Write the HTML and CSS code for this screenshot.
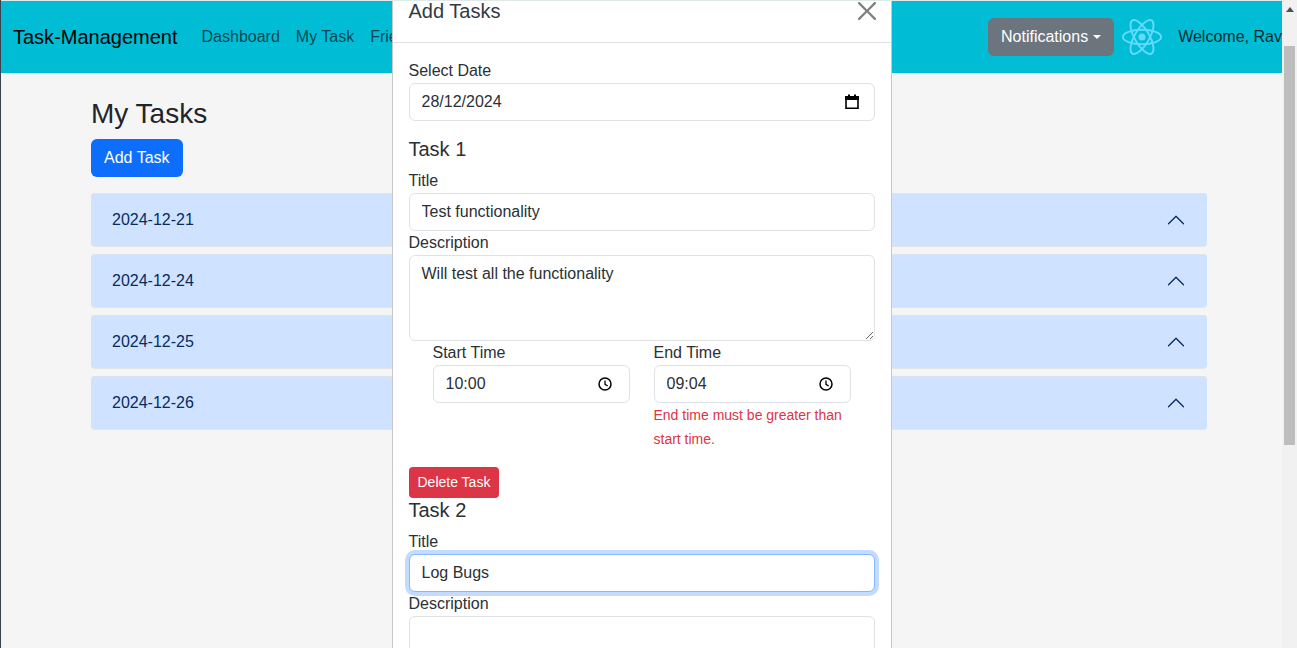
FILE: index.html
```html
<!DOCTYPE html>
<html lang="en">

<head>
  <meta charset="UTF-8">
  <meta name="viewport" content="width=device-width, initial-scale=1.0">
  <title>Task-Management</title>
  <link rel="stylesheet" href="styles.css">
</head>

<body>
  <div class="app">
    <div class="page">
      <nav class="navbar">
        <a class="brand" href="#">Task-Management</a>
        <a class="nav-link" href="#">Dashboard</a>
        <a class="nav-link" href="#">My Task</a>
        <a class="nav-link" href="#">Friends</a>
        <div class="nav-right">
          <button class="btn btn-notify" type="button">Notifications<span class="caret"></span></button>
          <svg class="logo" viewBox="-11.5 -10.23 23 20.46" width="40" height="36">
            <circle r="2.05" fill="#61dafb"></circle>
            <g stroke="#61dafb" fill="none" stroke-width="1.1">
              <ellipse rx="11" ry="4.2"></ellipse>
              <ellipse rx="11" ry="4.2" transform="rotate(60)"></ellipse>
              <ellipse rx="11" ry="4.2" transform="rotate(120)"></ellipse>
            </g>
          </svg>
          <span class="welcome">Welcome, Ravi</span>
        </div>
      </nav>

      <main class="container">
        <h2 class="page-title">My Tasks</h2>
        <button class="btn btn-primary" type="button">Add Task</button>
        <div class="accordion">
          <div class="acc-item"><span>2024-12-21</span>
            <svg class="chev" viewBox="0 0 16 16" width="20" height="20"><path fill="#052c65" fill-rule="evenodd" d="M14.354 11.354a.5.5 0 0 1-.708 0L8 5.707l-5.646 5.647a.5.5 0 0 1-.708-.708l6-6a.5.5 0 0 1 .708 0l6 6a.5.5 0 0 1 0 .708z"></path></svg>
          </div>
          <div class="acc-item"><span>2024-12-24</span>
            <svg class="chev" viewBox="0 0 16 16" width="20" height="20"><path fill="#052c65" fill-rule="evenodd" d="M14.354 11.354a.5.5 0 0 1-.708 0L8 5.707l-5.646 5.647a.5.5 0 0 1-.708-.708l6-6a.5.5 0 0 1 .708 0l6 6a.5.5 0 0 1 0 .708z"></path></svg>
          </div>
          <div class="acc-item"><span>2024-12-25</span>
            <svg class="chev" viewBox="0 0 16 16" width="20" height="20"><path fill="#052c65" fill-rule="evenodd" d="M14.354 11.354a.5.5 0 0 1-.708 0L8 5.707l-5.646 5.647a.5.5 0 0 1-.708-.708l6-6a.5.5 0 0 1 .708 0l6 6a.5.5 0 0 1 0 .708z"></path></svg>
          </div>
          <div class="acc-item"><span>2024-12-26</span>
            <svg class="chev" viewBox="0 0 16 16" width="20" height="20"><path fill="#052c65" fill-rule="evenodd" d="M14.354 11.354a.5.5 0 0 1-.708 0L8 5.707l-5.646 5.647a.5.5 0 0 1-.708-.708l6-6a.5.5 0 0 1 .708 0l6 6a.5.5 0 0 1 0 .708z"></path></svg>
          </div>
        </div>
      </main>

      <div class="modal">
        <div class="modal-header">
          <h5 class="modal-title">Add Tasks</h5>
          <svg class="close" viewBox="0 0 16 16" width="18" height="18"><path fill="#7f7f7f" d="M.293.293a1 1 0 0 1 1.414 0L8 6.586 14.293.293a1 1 0 1 1 1.414 1.414L9.414 8l6.293 6.293a1 1 0 0 1-1.414 1.414L8 9.414l-6.293 6.293a1 1 0 0 1-1.414-1.414L6.586 8 .293 1.707a1 1 0 0 1 0-1.414z"></path></svg>
        </div>
        <form class="modal-body">
          <label class="label">Select Date</label>
          <div class="control with-icon">
            <input class="bare" type="text" value="28/12/2024">
            <svg class="icon-cal" viewBox="0 0 14 16" width="14" height="16"><path fill="none" stroke="#000" stroke-width="1.6" d="M1 4.5h12v9.7H1z"></path><path fill="#000" d="M0 2h14v4H0zM3 .5h2v2H3zM9 .5h2v2H9z"></path></svg>
          </div>

          <h5 class="task-title">Task 1</h5>
          <label class="label">Title</label>
          <input class="control" type="text" value="Test functionality">
          <label class="label">Description</label>
          <textarea class="control area" rows="3">Will test all the functionality</textarea>

          <div class="time-row">
            <div class="time-col">
              <label class="label">Start Time</label>
              <div class="control with-icon">
                <input class="bare" type="text" value="10:00">
                <svg class="icon-clock" viewBox="0 0 16 16" width="16" height="16"><circle cx="8" cy="8" r="6" fill="none" stroke="#000" stroke-width="1.5"></circle><path fill="none" stroke="#000" stroke-width="1.3" d="M8 4.4V8.3l2.7 1.7"></path></svg>
              </div>
            </div>
            <div class="time-col">
              <label class="label">End Time</label>
              <div class="control with-icon">
                <input class="bare" type="text" value="09:04">
                <svg class="icon-clock" viewBox="0 0 16 16" width="16" height="16"><circle cx="8" cy="8" r="6" fill="none" stroke="#000" stroke-width="1.5"></circle><path fill="none" stroke="#000" stroke-width="1.3" d="M8 4.4V8.3l2.7 1.7"></path></svg>
              </div>
              <p class="error">End time must be greater than start time.</p>
            </div>
          </div>

          <button class="btn btn-danger" type="button">Delete Task</button>

          <h5 class="task-title task-two">Task 2</h5>
          <label class="label">Title</label>
          <input class="control focused" type="text" value="Log Bugs">
          <label class="label">Description</label>
          <textarea class="control area" rows="3"></textarea>
        </form>
      </div>
    </div>

    <div class="scrollbar">
      <div class="arrow"></div>
      <div class="thumb"></div>
    </div>
  </div>
</body>

</html>
```

FILE: styles.css
```css
* {
  box-sizing: border-box;
}

html, body {
  height: 100%;
  margin: 0;
  overflow: hidden;
}

body {
  font-family: "Liberation Sans", Arial, sans-serif;
  font-size: 16px;
  line-height: 1.5;
  color: #212529;
  background-color: #f5f5f5;
}

.app {
  display: flex;
  height: 648px;
}

.page {
  position: relative;
  flex: 1;
  min-width: 0;
  overflow: hidden;
  border-left: 1px solid #3a444e;
}

/* thin line along the top edge, runs over the modal too */
.page::after {
  content: "";
  position: absolute;
  top: 0;
  left: 0;
  right: 0;
  height: 1px;
  background-color: #dfe9e7;
}

.scrollbar {
  width: 15px;
  background-color: #f1f1f1;
  padding-left: 2px;
}

.arrow {
  width: 0;
  height: 0;
  margin: 7px 0 0 2px;
  border-left: 4px solid transparent;
  border-right: 4px solid transparent;
  border-bottom: 5px solid #505050;
}

.thumb {
  width: 11px;
  height: 399px;
  margin-top: 34px;
  background-color: #bdbdbd;
}

/* navbar */
.navbar {
  display: flex;
  align-items: center;
  height: 72px;
  margin-top: 1px;
  padding: 0 0 0 12px;
  background-color: #00bcd4;
  white-space: nowrap;
}

.brand {
  margin-right: 16px;
  font-size: 20px;
  color: #000;
  text-decoration: none;
}

.nav-link {
  padding: 0 8px;
  color: rgba(0, 0, 0, 0.65);
  text-decoration: none;
}

.nav-right {
  display: flex;
  align-items: center;
  margin-left: auto;
  flex: 0 0 294px;
  overflow: hidden;
}

.nav-right > * {
  flex: none;
}

.logo {
  margin-left: 8px;
}

.welcome {
  margin-left: 16px;
  color: rgba(0, 0, 0, 0.8);
}

/* buttons */
.btn {
  padding: 6px 12px;
  font: inherit;
  color: #fff;
  border: 1px solid transparent;
  border-radius: 6px;
}

.btn-notify {
  background-color: #6c757d;
}

.caret {
  display: inline-block;
  margin-left: 5px;
  vertical-align: 3px;
  border-top: 4.8px solid #fff;
  border-left: 4.8px solid transparent;
  border-right: 4.8px solid transparent;
}

.btn-primary {
  background-color: #0d6efd;
}

.btn-danger {
  display: block;
  padding: 4px 8px;
  font-size: 14px;
  background-color: #dc3545;
  border-radius: 4px;
}

/* page content */
.container {
  padding: 20px 75px 0 90px;
}

.page-title {
  margin: 0 0 4px;
  font-size: 28px;
  font-weight: 400;
  line-height: 42px;
}

.accordion {
  margin-top: 16px;
}

.acc-item {
  display: flex;
  align-items: center;
  justify-content: space-between;
  height: 53px;
  margin-bottom: 8px;
  padding: 0 21px;
  color: #052c65;
  background-color: #cfe2ff;
  border-radius: 4px;
  box-shadow: inset 0 1px 0 #dbe3ee, 0 1px 0 #e4e4e4;
}

/* modal */
.modal {
  position: absolute;
  top: -22px;
  left: 390.5px;
  width: 500px;
  color: #2b3035;
  background-color: #fff;
  border: 1px solid #c4c8cb;
  border-radius: 8px;
}

.modal-header {
  display: flex;
  align-items: center;
  justify-content: space-between;
  height: 64px;
  padding: 0 15px 0 16px;
  border-bottom: 1px solid #dee2e6;
}

.modal-title {
  margin: 0;
  font-size: 20px;
  font-weight: 400;
  line-height: 30px;
  color: #343a40;
}

.modal-body {
  padding: 16px;
}

.label {
  display: block;
  line-height: 24px;
}

.control {
  display: block;
  width: 100%;
  height: 38px;
  padding: 6px 12px;
  font: inherit;
  color: #2b3035;
  background-color: #fff;
  border: 1px solid #dee2e6;
  border-radius: 6px;
}

.area {
  height: 86px;
}

.with-icon {
  display: flex;
  align-items: center;
  justify-content: space-between;
}

.bare {
  flex: 1;
  min-width: 0;
  padding: 0;
  font: inherit;
  color: inherit;
  border: 0;
  outline: 0;
}

.with-icon svg {
  flex: none;
}

.icon-cal {
  margin-right: 3px;
}

.icon-clock {
  margin-right: 4px;
}

.focused {
  border-color: #86b7fe;
  outline: 0;
  box-shadow: 0 0 0 4px rgba(13, 110, 253, 0.25);
}

.task-title {
  margin: 16px 0 8px;
  font-size: 20px;
  font-weight: 400;
  line-height: 24px;
}

.task-two {
  margin-top: 0;
}

.time-row {
  display: flex;
  gap: 24px;
  padding: 0 24px;
  margin-bottom: 16px;
}

.time-col {
  flex: 1;
  min-width: 0;
}

.error {
  margin: 0;
  font-size: 14px;
  line-height: 24px;
  color: #dc3545;
}
```
